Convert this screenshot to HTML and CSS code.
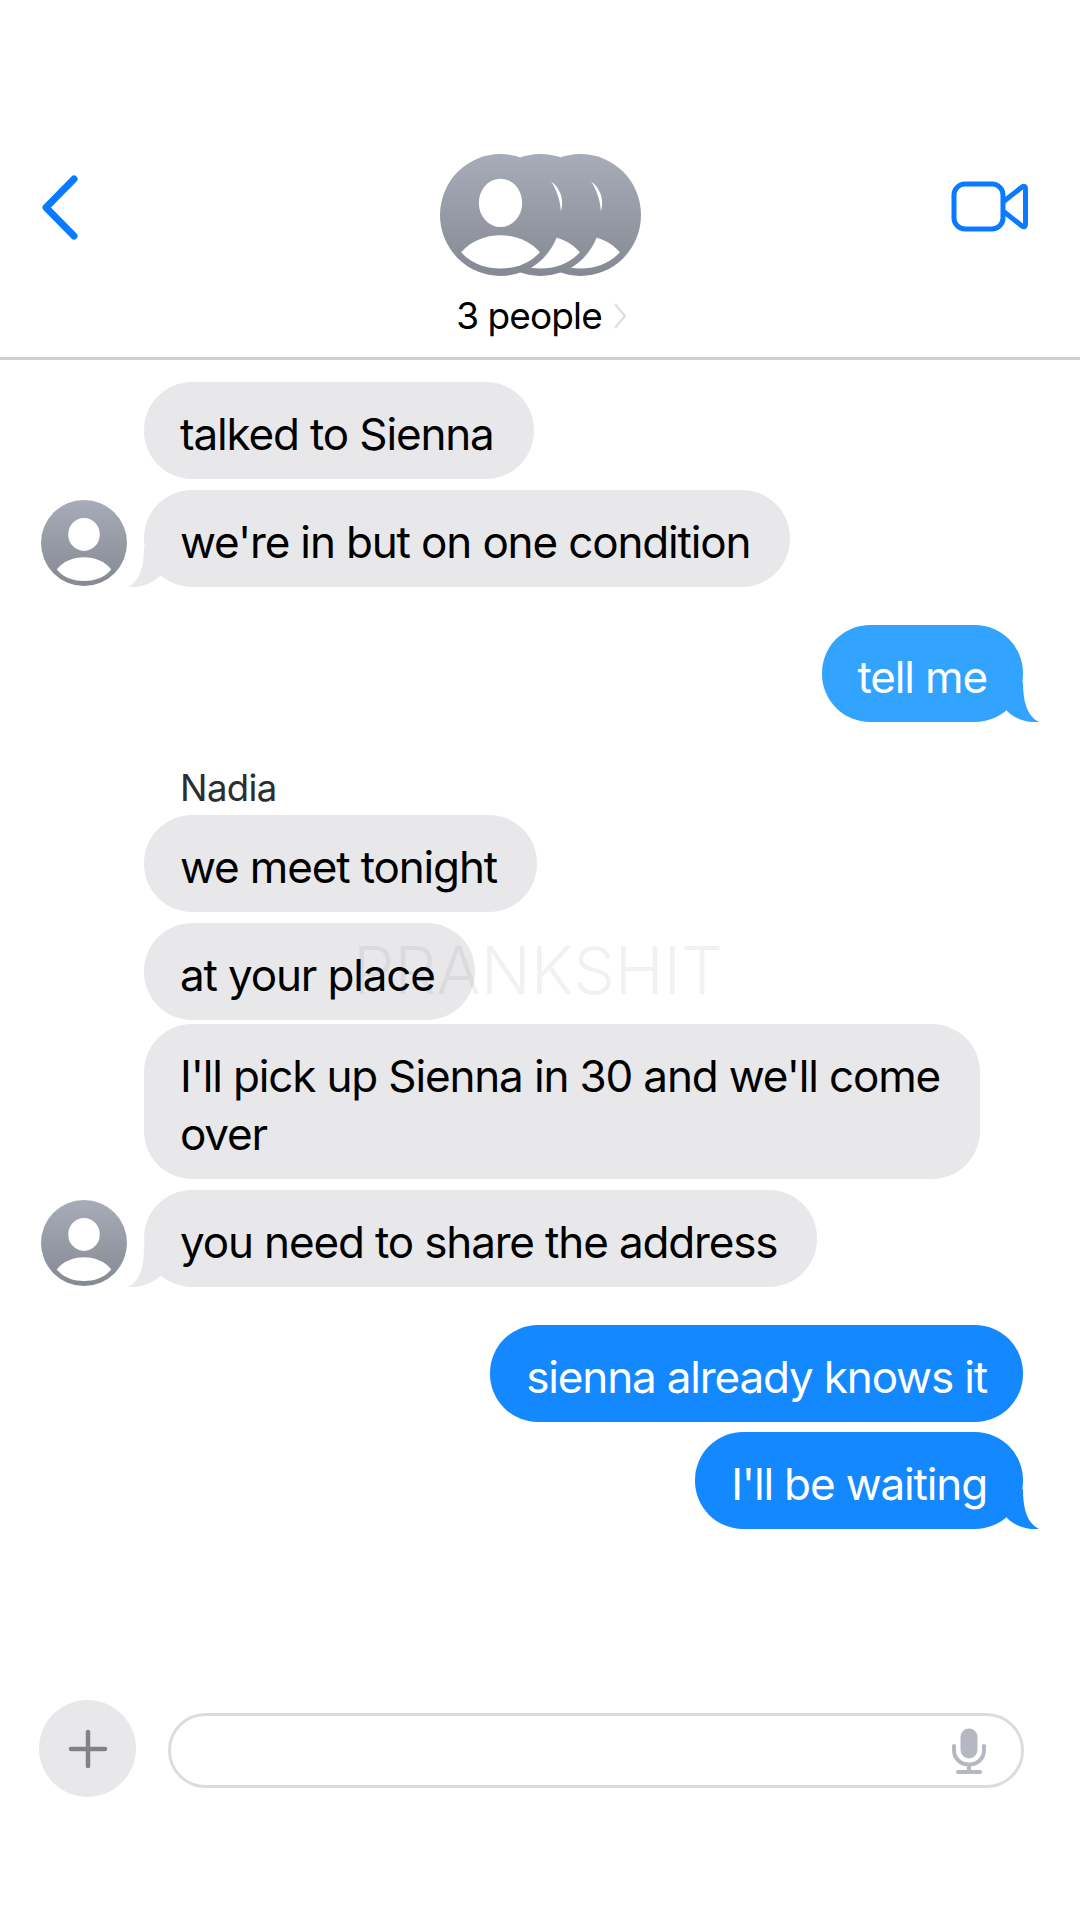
FILE: index.html
```html
<!DOCTYPE html>
<html lang="en">
<head>
<meta charset="utf-8">
<title>3 people</title>
<link rel="stylesheet" href="styles.css">
</head>
<body>
<div class="screen">
  <header class="header">
    <svg class="back" viewBox="0 0 40 66" aria-hidden="true"><path d="M33 4 L5 32.5 L33 61" /></svg>
    <div class="group">
      <div class="stack">
        <div class="avatar avatar-large layer-1"><svg viewBox="-60 -60 120 120"><ellipse cx="0" cy="-12" rx="21.5" ry="24"/><path d="M-39 37C-30 26-15 20 0 20C15 20 30 26 39 37C28 49 14 53 0 53C-14 53-28 49-39 37Z"/></svg></div>
        <div class="avatar avatar-large layer-2"><svg viewBox="-60 -60 120 120"><ellipse cx="0" cy="-12" rx="21.5" ry="24"/><path d="M-39 37C-30 26-15 20 0 20C15 20 30 26 39 37C28 49 14 53 0 53C-14 53-28 49-39 37Z"/></svg></div>
        <div class="avatar avatar-large layer-3"><svg viewBox="-60 -60 120 120"><ellipse cx="0" cy="-12" rx="21.5" ry="24"/><path d="M-39 37C-30 26-15 20 0 20C15 20 30 26 39 37C28 49 14 53 0 53C-14 53-28 49-39 37Z"/></svg></div>
      </div>
      <div class="title">
        <span>3 people</span>
        <svg class="title-chevron" viewBox="0 0 14 28" aria-hidden="true"><path d="M2 2 L12 14 L2 26"/></svg>
      </div>
    </div>
    <svg class="video" viewBox="0 0 78 52" aria-hidden="true">
      <rect x="4" y="3" width="49" height="45" rx="11"/>
      <path d="M53 21 L72 6 Q75.500 4 75.500 8 L75.500 43 Q75.500 47 72 45 L53 30"/>
    </svg>
  </header>

  <main class="thread">
    <div class="row received"><div class="bubble gray">talked to Sienna</div></div>
    <div class="row received with-avatar">
      <div class="avatar avatar-small"><svg viewBox="-60 -60 120 120"><ellipse cx="0" cy="-12" rx="22" ry="23"/><path d="M-38 37C-30 26-15 20 0 20C15 20 30 26 38 37C28 49 14 53 0 53C-14 53-28 49-38 37Z"/></svg></div>
      <div class="bubble gray">we're in but on one condition<svg class="tail tail-left" viewBox="0 0 40 40"><path d="M16 0C16 20 12 34 0 40C12 41 24 37 32 29L40 10Z"/></svg></div>
    </div>
    <div class="row sent gap-large"><div class="bubble light-blue">tell me<svg class="tail tail-right" viewBox="0 0 40 40"><path d="M16 0C16 20 12 34 0 40C12 41 24 37 32 29L40 10Z"/></svg></div></div>
    <div class="sender">Nadia</div>
    <div class="row received"><div class="bubble gray">we meet tonight</div></div>
    <div class="row received"><div class="bubble gray">at your place</div></div>
    <div class="row received gap-small"><div class="bubble gray wide">I'll pick up Sienna in 30 and we'll come over</div></div>
    <div class="row received with-avatar">
      <div class="avatar avatar-small"><svg viewBox="-60 -60 120 120"><ellipse cx="0" cy="-12" rx="22" ry="23"/><path d="M-38 37C-30 26-15 20 0 20C15 20 30 26 38 37C28 49 14 53 0 53C-14 53-28 49-38 37Z"/></svg></div>
      <div class="bubble gray">you need to share the address<svg class="tail tail-left" viewBox="0 0 40 40"><path d="M16 0C16 20 12 34 0 40C12 41 24 37 32 29L40 10Z"/></svg></div>
    </div>
    <div class="row sent gap-large"><div class="bubble blue">sienna already knows it</div></div>
    <div class="row sent"><div class="bubble blue">I'll be waiting<svg class="tail tail-right" viewBox="0 0 40 40"><path d="M16 0C16 20 12 34 0 40C12 41 24 37 32 29L40 10Z"/></svg></div></div>
  </main>

  <footer class="composer">
    <div class="plus"><svg viewBox="0 0 40 40" aria-hidden="true"><path d="M20 3V37M3 20H37"/></svg></div>
    <div class="input">
      <svg class="mic" viewBox="0 0 34 46" aria-hidden="true">
        <rect class="mic-head" x="8.500" y="0.500" width="17" height="30" rx="8.500"/>
        <path class="mic-stand" d="M2 18V22C2 30.500 8.500 36.500 17 36.500C25.500 36.500 32 30.500 32 22V18M17 36.500V44M6 44H28"/>
      </svg>
    </div>
  </footer>

  <div class="watermark">PRANKSHIT</div>
</div>
</body>
</html>
```

FILE: styles.css
```css
* { box-sizing: border-box; }
html, body { margin: 0; padding: 0; background: #fff; }
.screen {
  position: relative;
  width: 1080px;
  height: 1920px;
  overflow: hidden;
  display: flex;
  flex-direction: column;
  background: #fff;
  font-family: Inter, "Liberation Sans", sans-serif;
  color: #000;
}

/* header */
.header {
  display: grid;
  grid-template-columns: 1fr 201px 1fr;
  align-items: start;
  height: 360px;
  padding: 154px 39px 0 39px;
  border-bottom: 3px solid #cfcfcf;
}
.back {
  width: 40px;
  height: 66px;
  margin: 21px 0 0 2px;
  fill: none;
  stroke: #0a7aff;
  stroke-width: 7;
  stroke-linecap: round;
  stroke-linejoin: round;
}
.video {
  justify-self: end;
  width: 78px;
  height: 52px;
  margin: 27px 13px 0 0;
  fill: none;
  stroke: #0a7aff;
  stroke-width: 5;
  stroke-linejoin: round;
}
.group { display: flex; flex-direction: column; align-items: center; }
.stack { display: flex; }
.avatar {
  flex: none;
  border-radius: 50%;
  background: linear-gradient(#a7acb8, #858993);
}
.avatar svg { display: block; width: 100%; height: 100%; fill: #fff; }
.avatar-large { width: 121px; height: 122px; position: relative; }
.avatar-large + .avatar-large { margin-left: -81px; }
.layer-1 { z-index: 3; }
.layer-2 { z-index: 2; }
.layer-3 { z-index: 1; }
.avatar-small { width: 86px; height: 86px; margin-bottom: 1px; }
.title {
  display: flex;
  align-items: center;
  gap: 11px;
  margin-top: 18px;
  margin-left: 3px;
  font-size: 37px;
  line-height: 44px;
  letter-spacing: -0.9px;
  white-space: nowrap;
}
.title-chevron {
  width: 14px;
  height: 28px;
  fill: none;
  stroke: #dcdcdc;
  stroke-width: 2;
}

/* thread */
.thread { display: flex; flex-direction: column; padding-top: 22px; }
.row { display: flex; margin-top: 10.5px; }
.row:first-child { margin-top: 0; }
.received { padding-left: 144px; }
.received.with-avatar { padding-left: 41px; align-items: flex-end; gap: 17px; }
.sent { justify-content: flex-end; padding-right: 57px; }
.row.gap-large { margin-top: 38px; }
.row.gap-small { margin-top: 4.5px; }
.bubble {
  position: relative;
  padding: 23px 40px 16px 36px;
  border-radius: 48px;
  font-size: 44px;
  line-height: 58px;
  letter-spacing: -1.15px;
}
.sent .bubble { padding-right: 36px; }
.bubble.wide { width: 836px; padding-right: 30px; }
.gray { background: #e8e8ea; fill: #e8e8ea; color: #000; }
.blue { background: #1488ff; fill: #1488ff; color: #fff; }
.light-blue { background: #32a3ff; fill: #32a3ff; color: #fff; }
.tail { position: absolute; bottom: 0; width: 40px; height: 40px; }
.tail-left { left: -16px; }
.tail-right { right: -16px; transform: scaleX(-1); }
.sender {
  margin-top: 46px;
  margin-bottom: -3px;
  padding-left: 180px;
  font-size: 36.5px;
  line-height: 40px;
  letter-spacing: -0.6px;
  color: #2b2d30;
}

/* composer */
.composer {
  display: flex;
  align-items: center;
  gap: 32px;
  margin-top: auto;
  padding: 0 56px 123px 39px;
}
.plus {
  flex: none;
  width: 97px;
  height: 97px;
  display: flex;
  align-items: center;
  justify-content: center;
  border-radius: 50%;
  background: #e8e8ea;
}
.plus svg {
  width: 40px;
  height: 40px;
  fill: none;
  stroke: #808285;
  stroke-width: 4.500;
  stroke-linecap: round;
}
.input {
  flex: 1;
  height: 75px;
  margin-top: 4px;
  display: flex;
  align-items: center;
  justify-content: flex-end;
  padding-right: 35px;
  border: 3px solid #dcdcdc;
  border-radius: 38px;
}
.mic { width: 34px; height: 46px; }
.mic-head { fill: #b4b8c2; }
.mic-stand { fill: none; stroke: #b4b8c2; stroke-width: 4; stroke-linecap: round; }

/* overlay */
.watermark {
  position: absolute;
  left: 353px;
  top: 930px;
  font-size: 66px;
  line-height: 80px;
  font-weight: 300;
  color: rgba(0, 0, 0, 0.055);
  pointer-events: none;
}
```
